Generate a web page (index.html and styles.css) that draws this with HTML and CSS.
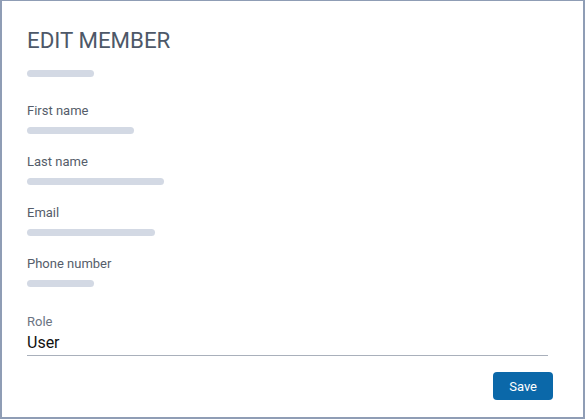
FILE: index.html
```
<!DOCTYPE html>
<html>
<head>
<meta charset="utf-8">
<link rel="stylesheet" href="styles.css">
</head>
<body>
<div class="dialog">
  <h1 class="title">EDIT MEMBER</h1>
  <div class="bar bar-title"></div>
  <div class="group">
    <div class="label">First name</div>
    <div class="bar bar-first"></div>
  </div>
  <div class="group">
    <div class="label">Last name</div>
    <div class="bar bar-last"></div>
  </div>
  <div class="group">
    <div class="label">Email</div>
    <div class="bar bar-email"></div>
  </div>
  <div class="group">
    <div class="label">Phone number</div>
    <div class="bar bar-phone"></div>
  </div>
  <div class="role">
    <div class="label role-label">Role</div>
    <div class="select">User</div>
  </div>
  <div class="footer">
    <button class="save">Save</button>
  </div>
</div>
</body>
</html>
```
FILE: styles.css
```
html, body {
  margin: 0;
  padding: 0;
  background: #ffffff;
}
body {
  font-family: Roboto, "Liberation Sans", sans-serif;
}
.dialog {
  box-sizing: border-box;
  width: 585px;
  height: 419px;
  border: 2px solid #8f9db5;
  border-top-width: 1px;
  padding: 26px 30px 0 25px;
  display: flex;
  flex-direction: column;
  align-items: flex-start;
}
.title {
  margin: 0;
  font-size: 22.3px;
  line-height: 26px;
  font-weight: 400;
  color: #4d5868;
}
.bar {
  height: 7px;
  border-radius: 4px;
  background: #d3d9e4;
}
.bar-title { width: 67px; margin-top: 17px; }
.bar-first { width: 107px; }
.bar-last { width: 137px; }
.bar-email { width: 128px; }
.bar-phone { width: 67px; }
.group {
  display: flex;
  flex-direction: column;
  align-items: flex-start;
  gap: 8px;
  margin-top: 26px;
}
.group + .group { margin-top: 20px; }
.label {
  font-size: 13px;
  line-height: 16px;
  color: #555d6a;
}
.role {
  align-self: stretch;
  margin-top: 27px;
  margin-right: 5px;
}
.role-label { color: #6b7482; }
.select {
  margin-top: 3px;
  font-size: 16px;
  line-height: 20px;
  color: #111111;
  padding-bottom: 2px;
  border-bottom: 1px solid #a9b0bb;
}
.footer {
  align-self: stretch;
  display: flex;
  justify-content: flex-end;
  margin-top: 16px;
}
.save {
  height: 28px;
  padding: 0 16px;
  border: none;
  border-radius: 4px;
  background: #0b68a9;
  color: #ffffff;
  font-family: Roboto, "Liberation Sans", sans-serif;
  font-size: 13px;
}
```
